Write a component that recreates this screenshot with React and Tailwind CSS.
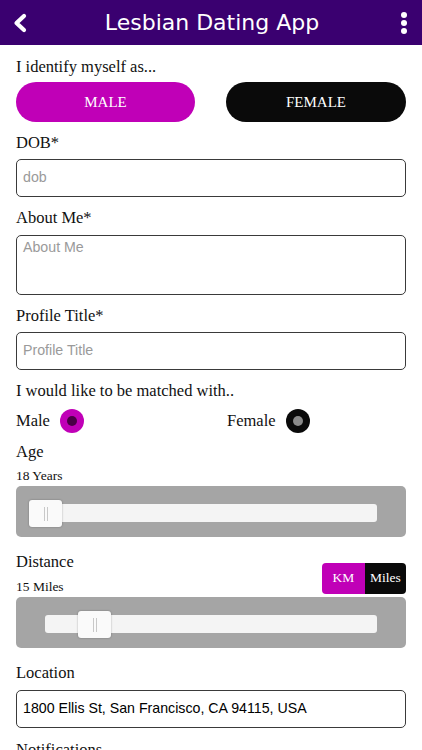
import React from "react";

const serif = { fontFamily: '"Liberation Serif", "DejaVu Serif", serif' };

function Label({ children, className = "" }) {
  return (
    <div className={`text-[16.5px] leading-[20px] text-[#111] ${className}`} style={serif}>
      {children}
    </div>
  );
}

function Input({ placeholder, value, className = "" }) {
  return (
    <div
      className={`h-[38px] rounded-[5px] border-[1.5px] border-[#3a3a3a] flex items-center px-[6px] text-[14.2px] ${className}`}
      style={{ fontFamily: '"Liberation Sans", Arial, sans-serif' }}
    >
      {value ? <span className="text-black">{value}</span> : <span className="text-[#9a9a9a]">{placeholder}</span>}
    </div>
  );
}

function Thumb() {
  return (
    <div className="w-[33px] h-[27px] bg-[#fafafa] rounded-[3px] shadow-[0_0_2px_rgba(0,0,0,0.35)] flex items-center justify-center gap-[2px] shrink-0">
      <div className="w-px h-[14px] bg-[#c8c8c8]" />
      <div className="w-px h-[14px] bg-[#c8c8c8]" />
    </div>
  );
}

function Slider({ left, thumbLeft, className = "" }) {
  return (
    <div className={`h-[51px] rounded-[5px] bg-[#a5a5a5] relative ${className}`}>
      <div
        className="absolute top-[18px] h-[18px] bg-[#f4f4f4] rounded-[3px]"
        style={{ left: left, right: 29 }}
      />
      <div className="absolute top-[14px]" style={{ left: thumbLeft }}>
        <Thumb />
      </div>
    </div>
  );
}

export default function App() {
  return (
    <div className="w-[422px] h-[750px] overflow-hidden bg-white">
      <div className="h-[45px] bg-[#3a0070] flex items-center justify-between px-[12px] text-white">
        <svg width="16" height="20" viewBox="0 0 16 20">
          <path d="M12 3 L4.5 10 L12 17" stroke="white" strokeWidth="4.2" fill="none" strokeLinecap="round" strokeLinejoin="round" />
        </svg>
        <div className="text-[22px] leading-none" style={{ fontFamily: '"DejaVu Sans", Verdana, sans-serif' }}>
          Lesbian Dating App
        </div>
        <div className="flex flex-col gap-[2px] items-center w-[16px] -mr-[2px]">
          <div className="w-[6px] h-[6px] rounded-full bg-white" />
          <div className="w-[6px] h-[6px] rounded-full bg-white" />
          <div className="w-[6px] h-[6px] rounded-full bg-white" />
        </div>
      </div>

      <div className="px-[16px]">
        <Label className="mt-[12px]">I identify myself as...</Label>
        <div className="mt-[5px] flex justify-between">
          <div className="w-[179px] h-[40px] rounded-full bg-[#c000b7] flex items-center justify-center text-white text-[15px]" style={serif}>
            MALE
          </div>
          <div className="w-[180px] h-[40px] rounded-full bg-[#0a0a0a] flex items-center justify-center text-white text-[15px]" style={serif}>
            FEMALE
          </div>
        </div>

        <Label className="mt-[11px]">DOB*</Label>
        <Input className="mt-[6px]" placeholder="dob" />

        <Label className="mt-[11px]">About Me*</Label>
        <div
          className="mt-[7px] h-[60px] rounded-[5px] border-[1.5px] border-[#3a3a3a] px-[6px] pt-[1px] text-[14.2px] text-[#9a9a9a]"
          style={{ fontFamily: '"Liberation Sans", Arial, sans-serif' }}
        >
          About Me
        </div>

        <Label className="mt-[11px]">Profile Title*</Label>
        <Input className="mt-[6px]" placeholder="Profile Title" />

        <Label className="mt-[11px]">I would like to be matched with..</Label>
        <div className="mt-[8px] flex items-center h-[24px]">
          <div className="flex items-center w-[211px]">
            <span className="text-[16.5px] leading-[20px] text-[#111]" style={serif}>Male</span>
            <div className="ml-[10px] w-[24px] h-[24px] rounded-full bg-[#c000b7] flex items-center justify-center">
              <div className="w-[10px] h-[10px] rounded-full bg-[#4a0046]" />
            </div>
          </div>
          <div className="flex items-center">
            <span className="text-[16.5px] leading-[20px] text-[#111]" style={serif}>Female</span>
            <div className="ml-[10px] w-[24px] h-[24px] rounded-full bg-[#0a0a0a] flex items-center justify-center">
              <div className="w-[10px] h-[10px] rounded-full bg-[#8a8a8a]" />
            </div>
          </div>
        </div>

        <Label className="mt-[9px]">Age</Label>
        <div className="mt-[6px] text-[13.5px] leading-[16px] text-[#111]" style={serif}>18 Years</div>
        <Slider className="mt-[2px]" left={13} thumbLeft={13} />

        <div className="mt-[15px] flex justify-between items-end">
          <div>
            <Label>Distance</Label>
            <div className="mt-[7px] text-[13.5px] leading-[16px] text-[#111]" style={serif}>15 Miles</div>
          </div>
          <div className="flex h-[31px] rounded-[4px] overflow-hidden mb-[1px] text-white text-[13.5px]" style={serif}>
            <div className="w-[43px] bg-[#c000b7] flex items-center justify-center">KM</div>
            <div className="w-[41px] bg-[#0a0a0a] flex items-center justify-center">Miles</div>
          </div>
        </div>
        <Slider className="mt-[2px]" left={29} thumbLeft={62} />

        <Label className="mt-[15px]">Location</Label>
        <Input className="mt-[7px]" value="1800 Ellis St, San Francisco, CA 94115, USA" />

        <Label className="mt-[12px]">Notifications</Label>
      </div>
    </div>
  );
}
